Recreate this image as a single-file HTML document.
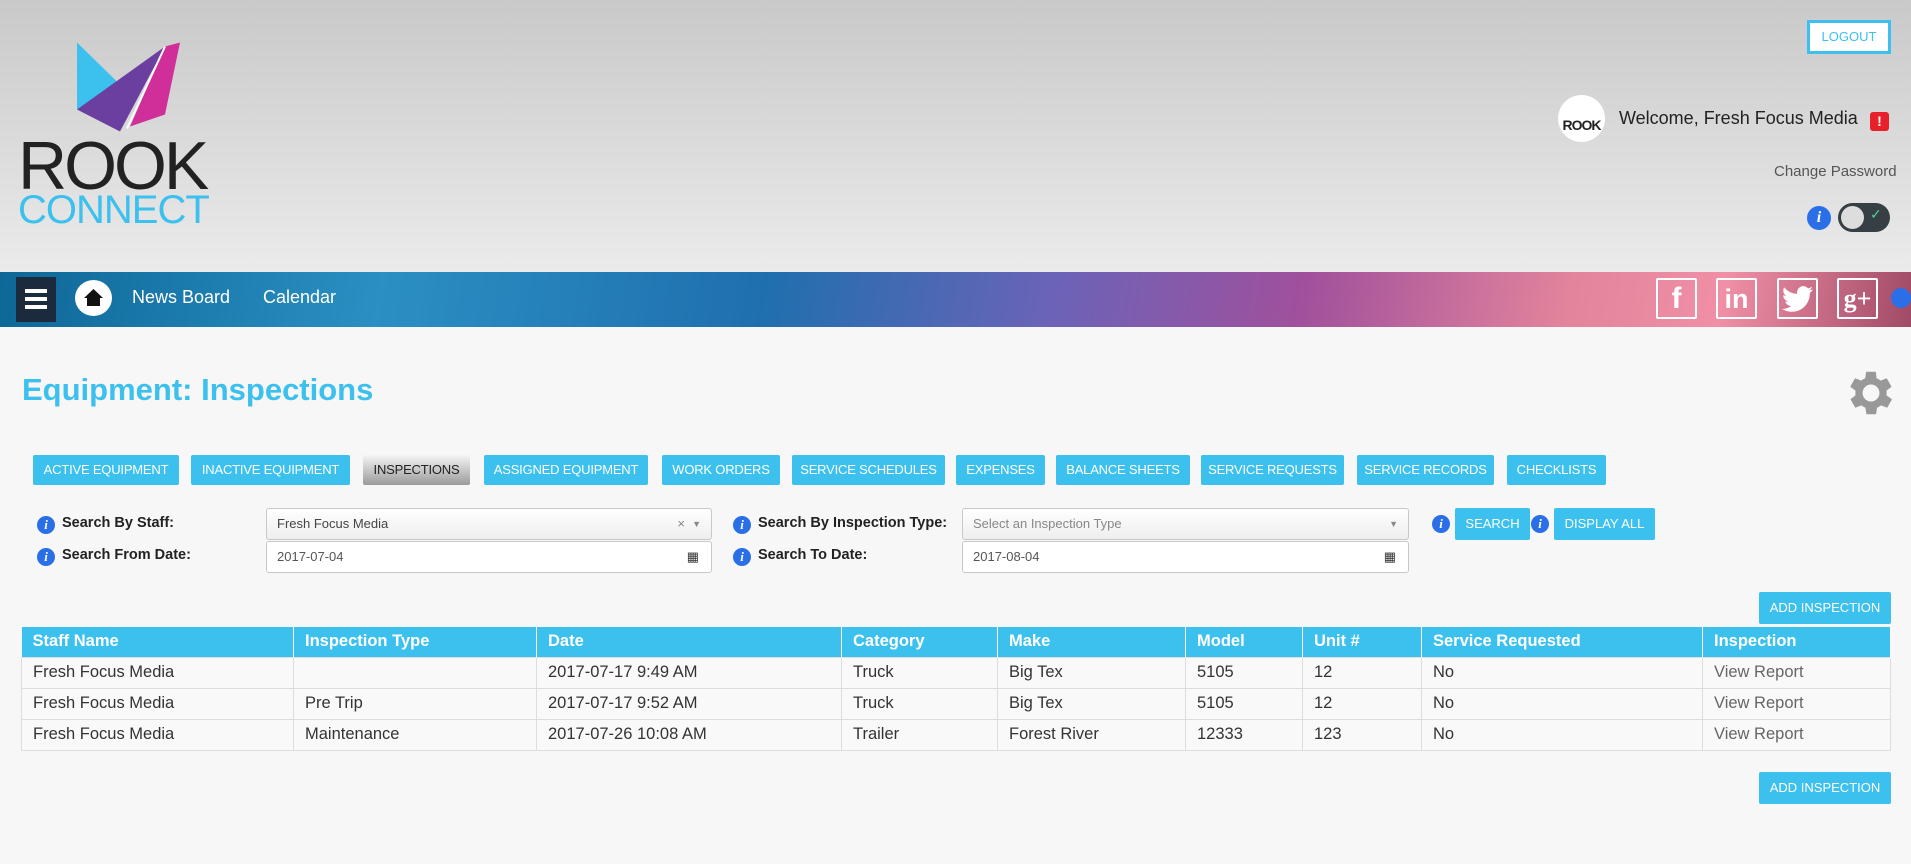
<!DOCTYPE html>
<html><head><meta charset="utf-8"><style>
*{box-sizing:border-box;margin:0;padding:0}
body{width:1911px;height:864px;overflow:hidden;background:#f7f7f7;font-family:"Liberation Sans",sans-serif;position:relative;color:#333}
.a{position:absolute}
#hdr{left:0;top:0;width:1911px;height:272px;background:linear-gradient(#c9c9c9,#ebebeb)}
#nav{left:0;top:272px;width:1911px;height:55px;background:linear-gradient(100deg,#0d6797 0%,#2b8fc3 20%,#1f6fae 40%,#6b63b8 55%,#a0509c 68%,#e3849c 82%,#f08fa6 90%,#a04a66 100%)}
.tab{position:absolute;top:455px;height:30px;background:#3cc0ee;color:#fff;font-size:13px;line-height:30px;text-align:center;border-radius:2px;letter-spacing:-.2px}
.lbl{position:absolute;font-size:14.5px;font-weight:bold;color:#222}
.ii{position:absolute;width:18px;height:18px;border-radius:50%;background:#2a6fe8;color:#fff;font:italic bold 13px/18px "Liberation Serif",serif;text-align:center}
.inp{position:absolute;height:32px;background:#fff;border:1px solid #c8c8c8;border-radius:3px;font-size:13px;line-height:30px;padding-left:10px;color:#555}
.btn{position:absolute;height:32px;background:#3cc0ee;color:#fff;font-size:13px;line-height:32px;text-align:center;border-radius:2px}
table{position:absolute;left:21px;top:627px;width:1870px;border-collapse:collapse;font-size:16.5px}
th{background:#3cc0ee;color:#fff;text-align:left;font-weight:bold;height:30px;padding:0 11px;border-right:1px solid #fff}
td{height:31px;padding:0 11px;border:1px solid #ddd;background:#f9f9f9;color:#333}
.soc{position:absolute;top:278px;width:41px;height:41px;border:2px solid #fff;border-radius:2px;color:#fff;text-align:center;font-weight:bold}
</style></head><body>
<div id="hdr" class="a"></div>
<svg class="a" style="left:30px;top:32px" width="160" height="105" viewBox="0 0 160 100">
<polygon points="47,8 90,50 47,75" fill="#3cc0ee"/>
<polygon points="135,12 90,97 47,75" fill="#6a3fa0"/>
<polygon points="135,12 150,8 135,80 100,92" fill="#d02f9a"/>
<line x1="135" y1="12" x2="97" y2="94" stroke="#fff" stroke-width="2"/>
</svg>
<div class="a" style="left:18px;top:132px;font-size:68px;line-height:68px;color:#222;letter-spacing:-3px">ROOK</div>
<div class="a" style="left:18px;top:190px;font-size:40px;line-height:40px;color:#3cc0ee;letter-spacing:-1px">CONNECT</div>
<div class="a" style="left:1807px;top:20px;width:84px;height:34px;border:3px solid #3cc0ee;background:#fff;color:#3cc0ee;font-size:13px;line-height:28px;text-align:center">LOGOUT</div>
<div class="a" style="left:1558px;top:95px;width:47px;height:47px;border-radius:50%;background:#fff;font-size:14px;line-height:60px;text-align:center;font-weight:bold;letter-spacing:-1px;color:#222">ROOK</div>
<div class="a" style="left:1619px;top:108px;font-size:18px;color:#222">Welcome, Fresh Focus Media</div>
<div class="a" style="left:1870px;top:112px;width:19px;height:19px;background:#e8202a;border-radius:3px;color:#fff;font-weight:bold;font-size:14px;text-align:center;line-height:19px">!</div>
<div class="a" style="left:1774px;top:163px;font-size:15px;color:#555">Change Password</div>
<div class="ii" style="left:1807px;top:206px;width:24px;height:24px;line-height:24px;font-size:16px">i</div>
<div class="a" style="left:1838px;top:203px;width:52px;height:29px;border-radius:15px;background:#353f44"><div class="a" style="left:3px;top:3px;width:23px;height:23px;border-radius:50%;background:#ddd"></div><div class="a" style="left:32px;top:3px;color:#5c9;font-size:14px">✓</div></div>
<div id="nav" class="a"></div>
<div class="a" style="left:16px;top:277px;width:40px;height:45px;background:#1b2a3c"><div class="a" style="left:9px;top:12px;width:22px;height:4px;background:#fff"></div><div class="a" style="left:9px;top:20px;width:22px;height:4px;background:#fff"></div><div class="a" style="left:9px;top:28px;width:22px;height:4px;background:#fff"></div></div>
<div class="a" style="left:75px;top:280px;width:37px;height:36px;border-radius:50%;background:#fff"><svg width="37" height="36"><path d="M18.5 9 L28 18 H25 V26 H12 V18 H9 Z" fill="#111"/></svg></div>
<div class="a" style="left:132px;top:287px;font-size:18px;color:#fff">News Board</div>
<div class="a" style="left:263px;top:287px;font-size:18px;color:#fff">Calendar</div>
<div class="soc" style="left:1656px;font-size:30px;line-height:38px">f</div>
<div class="soc" style="left:1716px;font-size:27px;line-height:38px">in</div>
<div class="soc" style="left:1777px"><svg width="37" height="37" viewBox="0 0 24 24"><path d="M22 6c-.7.3-1.5.6-2.4.7.9-.5 1.5-1.3 1.8-2.3-.8.5-1.7.8-2.6 1C18 4.6 17 4 15.8 4c-2.3 0-4.1 1.9-4.1 4.1 0 .3 0 .6.1.9C8.4 8.9 5.4 7.3 3.4 4.8c-.4.6-.6 1.3-.6 2.1 0 1.4.7 2.7 1.8 3.4-.7 0-1.300-.2-1.900-.5 0 2 1.400 3.700 3.300 4.100-.6.200-1.200.200-1.900.100.500 1.600 2 2.800 3.800 2.900-1.400 1.100-3.200 1.800-5.100 1.800H2c1.800 1.200 4 1.900 6.300 1.900 7.500 0 11.700-6.300 11.700-11.700V8.400C20.800 7.800 21.500 7 22 6z" fill="#fff"/></svg></div>
<div class="soc" style="left:1837px;font-size:26px;line-height:38px;font-family:'Liberation Serif',serif">g+</div>
<div class="ii" style="left:1891px;top:288px;width:20px;height:20px;background:#2a6fe8"></div>
<div class="a" style="left:22px;top:372px;font-size:31px;font-weight:bold;color:#3cc0ee">Equipment: Inspections</div>
<svg class="a" style="left:1842px;top:364px" width="58" height="58" viewBox="0 0 24 24"><path fill="#999" d="M19.4 13a7.5 7.5 0 0 0 0-2l2.1-1.6-2-3.5-2.5 1a7.6 7.6 0 0 0-1.7-1L15 3.2h-4l-.4 2.7a7.6 7.6 0 0 0-1.7 1l-2.5-1-2 3.5L6.6 11a7.5 7.5 0 0 0 0 2l-2.1 1.6 2 3.5 2.5-1c.5.4 1.1.7 1.7 1l.4 2.7h4l.4-2.7c.6-.3 1.2-.6 1.7-1l2.5 1 2-3.5zM13 15.5a3.5 3.5 0 1 1 0-7 3.5 3.5 0 0 1 0 7z" transform="translate(-1 0)"/></svg>
<div class="tab" style="left:33px;width:146px">ACTIVE EQUIPMENT</div>
<div class="tab" style="left:191px;width:159px">INACTIVE EQUIPMENT</div>
<div class="tab" style="left:363px;width:107px;background:linear-gradient(#f4f4f4,#9a9a9a);color:#222">INSPECTIONS</div>
<div class="tab" style="left:484px;width:164px">ASSIGNED EQUIPMENT</div>
<div class="tab" style="left:662px;width:118px">WORK ORDERS</div>
<div class="tab" style="left:792px;width:153px">SERVICE SCHEDULES</div>
<div class="tab" style="left:956px;width:89px">EXPENSES</div>
<div class="tab" style="left:1056px;width:134px">BALANCE SHEETS</div>
<div class="tab" style="left:1201px;width:143px">SERVICE REQUESTS</div>
<div class="tab" style="left:1357px;width:137px">SERVICE RECORDS</div>
<div class="tab" style="left:1507px;width:99px">CHECKLISTS</div>
<div class="ii" style="left:37px;top:516px">i</div><div class="lbl" style="left:62px;top:515px">Search By Staff:</div>
<div class="ii" style="left:37px;top:548px">i</div><div class="lbl" style="left:62px;top:547px">Search From Date:</div>
<div class="ii" style="left:733px;top:516px">i</div><div class="lbl" style="left:758px;top:515px">Search By Inspection Type:</div>
<div class="ii" style="left:733px;top:548px">i</div><div class="lbl" style="left:758px;top:547px">Search To Date:</div>
<div class="inp" style="left:266px;top:508px;width:446px;background:linear-gradient(#fff,#eee);color:#444">Fresh Focus Media<span class="a" style="right:26px;top:0;color:#888">×</span><span class="a" style="right:10px;top:0;color:#888;font-size:9px">▼</span></div>
<div class="inp" style="left:266px;top:541px;width:446px">2017-07-04<span class="a" style="right:12px;top:0;color:#333">▦</span></div>
<div class="inp" style="left:962px;top:508px;width:447px;background:linear-gradient(#fff,#eee);color:#888">Select an Inspection Type<span class="a" style="right:10px;top:0;color:#888;font-size:9px">▼</span></div>
<div class="inp" style="left:962px;top:541px;width:447px">2017-08-04<span class="a" style="right:12px;top:0;color:#333">▦</span></div>
<div class="ii" style="left:1432px;top:515px">i</div>
<div class="btn" style="left:1455px;top:508px;width:75px">SEARCH</div>
<div class="ii" style="left:1531px;top:515px">i</div>
<div class="btn" style="left:1554px;top:508px;width:101px">DISPLAY ALL</div>
<div class="btn" style="left:1759px;top:592px;width:132px">ADD INSPECTION</div>
<table>
<tr><th style="width:272px">Staff Name</th><th style="width:243px">Inspection Type</th><th style="width:305px">Date</th><th style="width:156px">Category</th><th style="width:188px">Make</th><th style="width:117px">Model</th><th style="width:119px">Unit #</th><th style="width:281px">Service Requested</th><th>Inspection</th></tr>
<tr><td>Fresh Focus Media</td><td></td><td>2017-07-17 9:49 AM</td><td>Truck</td><td>Big Tex</td><td>5105</td><td>12</td><td>No</td><td style="color:#666">View Report</td></tr>
<tr><td>Fresh Focus Media</td><td>Pre Trip</td><td>2017-07-17 9:52 AM</td><td>Truck</td><td>Big Tex</td><td>5105</td><td>12</td><td>No</td><td style="color:#666">View Report</td></tr>
<tr><td>Fresh Focus Media</td><td>Maintenance</td><td>2017-07-26 10:08 AM</td><td>Trailer</td><td>Forest River</td><td>12333</td><td>123</td><td>No</td><td style="color:#666">View Report</td></tr>
</table>
<div class="btn" style="left:1759px;top:772px;width:132px">ADD INSPECTION</div>
</body></html>
